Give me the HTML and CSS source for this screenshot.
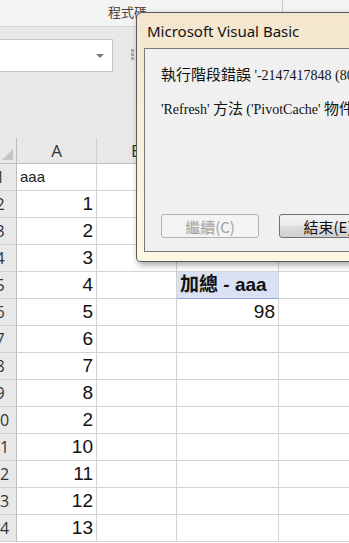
FILE: index.html
```html
<!DOCTYPE html>
<html lang="zh-Hant">
<head>
    <meta charset="UTF-8">
    <title>Excel - Runtime error</title>
    <link rel="stylesheet" href="styles.css">
</head>
<body>
    <div class="ribbon">
        <span class="group-label">程式碼</span>
        <span class="group-sep"></span>
    </div>

    <div class="formula-area">
        <div class="name-box">
            <span class="drop-arrow"></span>
        </div>
        <div class="grip"><i></i><i></i><i></i></div>
    </div>

    <div class="sheet">
        <div class="corner"><span class="corner-tri"></span></div>
        <div class="col-head">A</div>
        <div class="col-head">B</div>
        <div class="col-head">C</div>
        <div class="col-head last">D</div>

        <div class="row-head"><span>1</span></div>
        <div class="cell text">aaa</div><div class="cell"></div><div class="cell"></div><div class="cell last"></div>

        <div class="row-head"><span>2</span></div>
        <div class="cell num">1</div><div class="cell"></div><div class="cell"></div><div class="cell last"></div>

        <div class="row-head"><span>3</span></div>
        <div class="cell num">2</div><div class="cell"></div><div class="cell"></div><div class="cell last"></div>

        <div class="row-head"><span>4</span></div>
        <div class="cell num">3</div><div class="cell"></div><div class="cell"></div><div class="cell last"></div>

        <div class="row-head"><span>5</span></div>
        <div class="cell num">4</div><div class="cell"></div><div class="cell pivot-head">加總 - aaa</div><div class="cell last"></div>

        <div class="row-head"><span>6</span></div>
        <div class="cell num">5</div><div class="cell"></div><div class="cell num">98</div><div class="cell last"></div>

        <div class="row-head"><span>7</span></div>
        <div class="cell num">6</div><div class="cell"></div><div class="cell"></div><div class="cell last"></div>

        <div class="row-head"><span>8</span></div>
        <div class="cell num">7</div><div class="cell"></div><div class="cell"></div><div class="cell last"></div>

        <div class="row-head"><span>9</span></div>
        <div class="cell num">8</div><div class="cell"></div><div class="cell"></div><div class="cell last"></div>

        <div class="row-head"><span>10</span></div>
        <div class="cell num">2</div><div class="cell"></div><div class="cell"></div><div class="cell last"></div>

        <div class="row-head"><span>11</span></div>
        <div class="cell num">10</div><div class="cell"></div><div class="cell"></div><div class="cell last"></div>

        <div class="row-head"><span>12</span></div>
        <div class="cell num">11</div><div class="cell"></div><div class="cell"></div><div class="cell last"></div>

        <div class="row-head"><span>13</span></div>
        <div class="cell num">12</div><div class="cell"></div><div class="cell"></div><div class="cell last"></div>

        <div class="row-head"><span>14</span></div>
        <div class="cell num">13</div><div class="cell"></div><div class="cell"></div><div class="cell last"></div>
    </div>

    <!-- VBA runtime error dialog, floating over the sheet -->
    <div class="dialog">
        <div class="dialog-title">Microsoft Visual Basic</div>
        <div class="dialog-body">
            <p class="msg">執行階段錯誤 <span class="latin">'-2147417848 (80010108)':</span></p>
            <p class="msg"><span class="latin">'Refresh'</span> 方法 <span class="latin">('PivotCache'</span> 物件<span class="latin">)</span> 失敗</p>
            <div class="dialog-buttons">
                <button class="btn" disabled>繼續(C)</button>
                <button class="btn">結束(E)</button>
            </div>
        </div>
    </div>
</body>
</html>
```

FILE: styles.css
```css
body {
    margin: 0;
    width: 349px;
    height: 543px;
    overflow: hidden;
    position: relative;
    background-color: #ffffff;
    font-family: 'Noto Sans', 'Noto Sans CJK TC', sans-serif;
    color: #222;
}

.ribbon {
    height: 26px;
    background-color: #f3f3f3;
    border-bottom: 1px solid #d5d5d5;
    display: flex;
    align-items: flex-start;
}

.group-label {
    margin-left: 108px;
    margin-top: 4px;
    font-family: 'Noto Sans CJK TC', sans-serif;
    font-size: 13px;
    line-height: 16px;
    color: #444;
}

.group-sep {
    margin-left: 135px;
    width: 1px;
    height: 13px;
    background-color: #c8c8c8;
}

.formula-area {
    height: 111px;
    background-color: #e8e8e8;
    display: flex;
    align-items: flex-start;
}

.name-box {
    margin-top: 12px;
    width: 112px;
    height: 31px;
    background-color: #ffffff;
    border: 1px solid #c6c6c6;
    border-left: none;
    display: flex;
    align-items: center;
    justify-content: flex-end;
}

.drop-arrow {
    margin-right: 8px;
    width: 0;
    height: 0;
    border-left: 4px solid transparent;
    border-right: 4px solid transparent;
    border-top: 4px solid #777;
}

.grip {
    margin-top: 22px;
    margin-left: 18px;
    display: flex;
    flex-direction: column;
    gap: 1px;
}

.grip i {
    display: block;
    width: 3px;
    height: 3px;
    background-color: #a8a8a8;
}

.sheet {
    display: grid;
    grid-template-columns: 17px 80px 80px 102px 1fr;
    grid-template-rows: 26px;
    grid-auto-rows: 27px;
    font-family: 'Liberation Sans', 'Noto Sans CJK TC', sans-serif;
}

.corner {
    background-color: #e8e8e8;
    border-right: 1px solid #bdbdbd;
    border-bottom: 1px solid #bdbdbd;
    position: relative;
}

.corner-tri {
    position: absolute;
    right: 3px;
    bottom: 3px;
    width: 0;
    height: 0;
    border-left: 11px solid transparent;
    border-bottom: 11px solid #c4c4c4;
}

.col-head {
    background-color: #e8e8e8;
    border-right: 1px solid #d0d0d0;
    border-bottom: 1px solid #bdbdbd;
    font-family: 'Open Sans', sans-serif;
    font-size: 17px;
    color: #333;
    display: flex;
    align-items: center;
    justify-content: center;
}

.row-head {
    background-color: #e8e8e8;
    border-right: 1px solid #bdbdbd;
    border-bottom: 1px solid #d0d0d0;
    overflow: hidden;
    display: flex;
    align-items: center;
}

.row-head span {
    flex: none;
    width: 34px;
    margin-left: -17px;
    text-align: center;
    font-family: 'Open Sans', sans-serif;
    font-size: 16px;
    color: #333;
}

.cell {
    border-right: 1px solid #d4d4d4;
    border-bottom: 1px solid #d4d4d4;
    font-size: 18px;
    line-height: 26px;
    padding: 0 3px;
    white-space: nowrap;
    overflow: hidden;
}

.last {
    border-right: none;
}

.num {
    text-align: right;
    font-family: 'Liberation Sans Narrow', 'Liberation Sans', sans-serif;
    font-size: 19px;
    color: #111;
}

.text {
    font-size: 15px;
}

.pivot-head {
    background-color: #d9e1f2;
    border-bottom-color: #8ea9db;
    font-weight: bold;
    font-size: 19px;
    color: #111;
}

.dialog {
    position: absolute;
    left: 136px;
    top: 12px;
    width: 240px;
    height: 250px;
    box-sizing: border-box;
    border: 1px solid #5a5a5a;
    border-radius: 6px 6px 4px 4px;
    background: linear-gradient(to bottom, #f4e6cd 0%, #f7eddb 40%, #fcf8e4 100%);
    box-shadow: 2px 3px 6px rgba(0, 0, 0, 0.35);
    display: flex;
    flex-direction: column;
    padding: 0 0 9px 7px;
}

.dialog-title {
    height: 35px;
    padding-left: 3px;
    font-family: 'Noto Sans', sans-serif;
    font-size: 15px;
    line-height: 36px;
    color: #111;
    white-space: nowrap;
}

.dialog-body {
    flex: 1;
    background-color: #f0f0f0;
    border: 1px solid #7a7a7a;
    border-right: none;
    padding: 14px 0 0 16px;
    display: flex;
    flex-direction: column;
    overflow: hidden;
}

.msg {
    margin: 0 0 10px 0;
    font-family: 'Noto Sans CJK TC', serif;
    font-size: 15px;
    line-height: 22px;
    white-space: nowrap;
    color: #111;
}

.latin {
    font-family: 'Liberation Serif', serif;
    font-size: 14px;
}

.dialog-buttons {
    margin-top: auto;
    margin-bottom: 13px;
    display: flex;
    gap: 20px;
}

.btn {
    flex: none;
    width: 98px;
    height: 24px;
    padding: 0;
    border: 1px solid #707070;
    border-radius: 3px;
    background: linear-gradient(to bottom, #f2f2f2 0%, #ebebeb 50%, #dddddd 51%, #cfcfcf 100%);
    font-family: 'Noto Sans CJK TC', sans-serif;
    font-size: 15px;
    color: #111;
}

.btn:disabled {
    background: #f4f4f4;
    border-color: #adb2b5;
    color: #a0a0a0;
}
```
